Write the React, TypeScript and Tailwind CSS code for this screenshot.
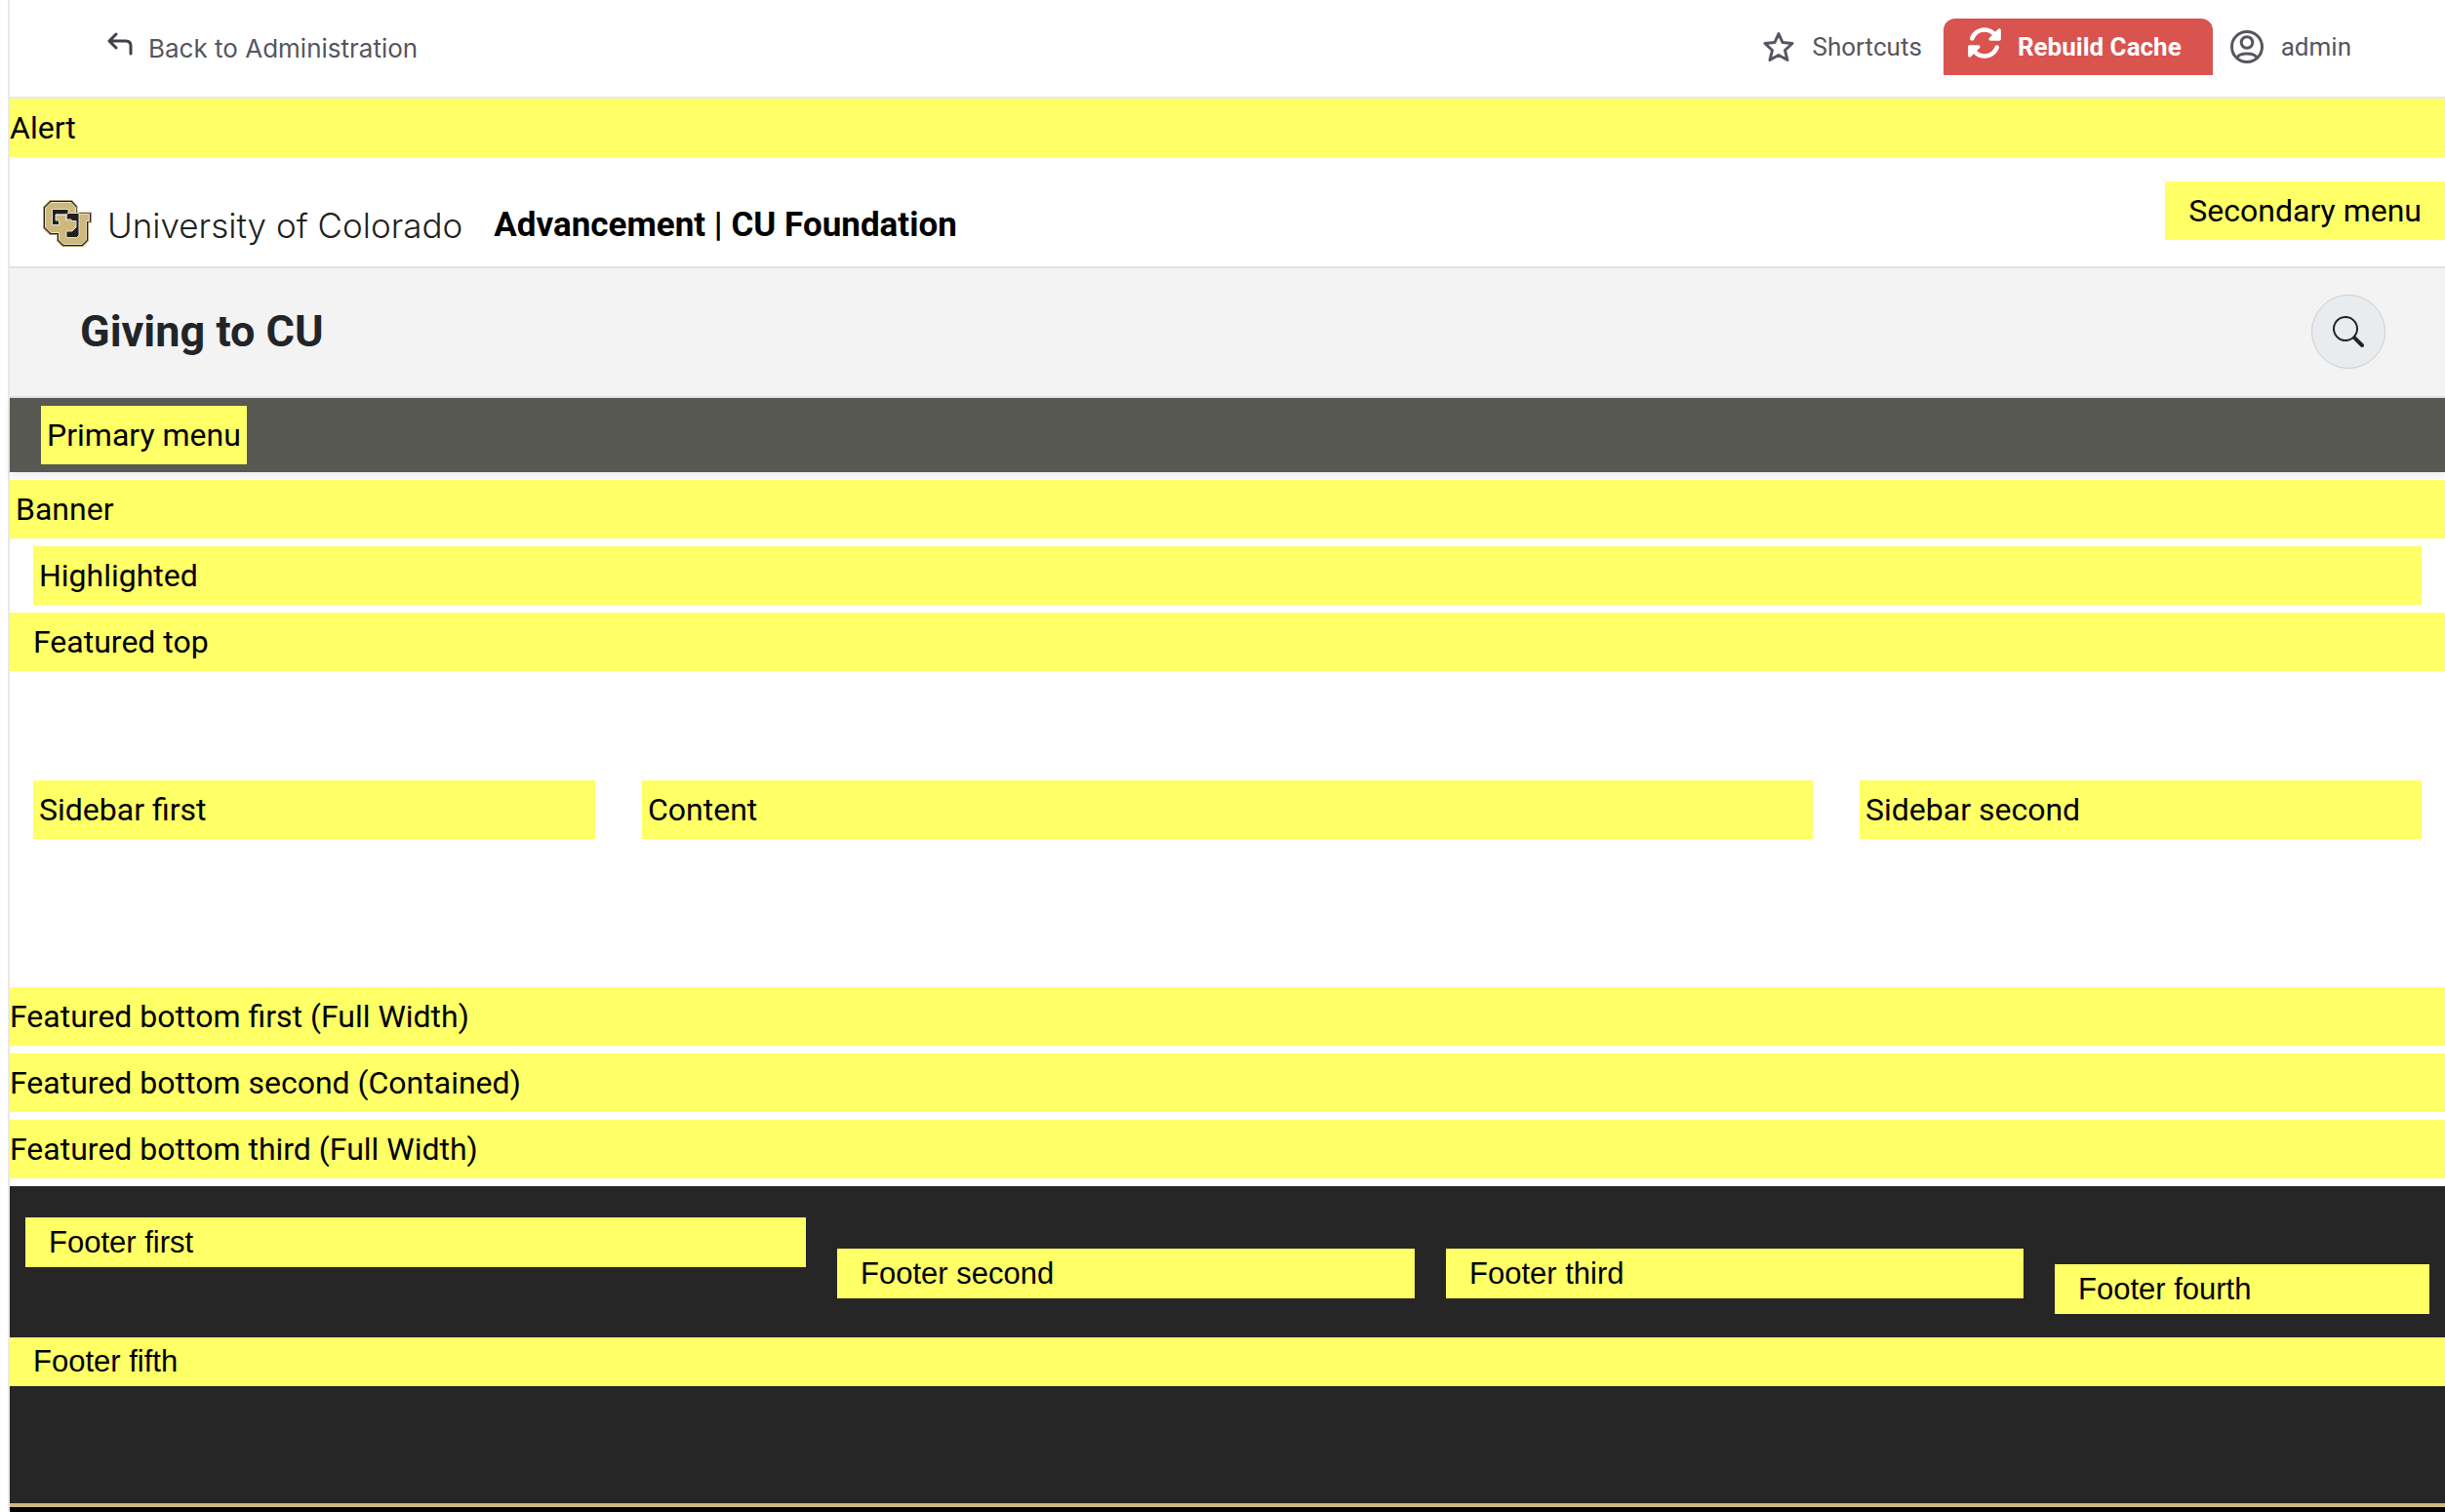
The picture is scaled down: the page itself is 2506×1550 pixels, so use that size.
import React from 'react';
import { BsSearch } from 'react-icons/bs';
import { FaRotate } from 'react-icons/fa6';

interface RegionProps {
    label: string;
    className?: string;
}

const Region: React.FC<RegionProps> = ({ label, className = '' }) => {
    return (
        <div className={`bg-[#ffff66] py-[6px] text-[32px] leading-[48px] text-black ${className}`}>
            {label}
        </div>
    );
};

const FooterRegion: React.FC<RegionProps> = ({ label, className = '' }) => {
    return (
        <div className={`bg-[#ffff66] px-6 font-['Liberation_Sans',sans-serif] text-[31px] text-black ${className}`}>
            {label}
        </div>
    );
};

const CuLogo: React.FC = () => {
    return (
        <svg viewBox="0 0 50 48" className="h-12 w-[50px] shrink-0" aria-hidden="true">
            <path d="M7 0H30L35.500 6V12.500H50V23.500H47V42L41 48H20L14 42V36H7L0 29V7Z" fill="#b5a06a" />
            <path d="M7.500 1H29.500L34.500 6.500V13.500H49V22.500H46V41.500L40.500 47H20.500L15 41.500V35H7.500L1 28.500V7.500Z" fill="#231f20" />
            <path d="M8 2.500H29L33.500 7.500V14.500H47.500V21.500H44.500V41L40 45.500H21L16.500 41V33.500H8L2.500 28V8Z" fill="#cfb87c" stroke="#f1ece0" strokeWidth="0.900" />
            {/* Counters of the interlocked letters */}
            <path d="M9.500 9.500H26V15H13V21H16.500V25.500H9.500Z" fill="#231f20" stroke="#f1ece0" strokeWidth="0.900" />
            <path d="M26 13.500H37V36L34.500 38.500H24V32H30L34 28V21.500H29V20H24V15Z" fill="#231f20" stroke="#f1ece0" strokeWidth="0.900" />
            <path d="M13 15H24V21.500" fill="none" stroke="#f1ece0" strokeWidth="0.900" />
        </svg>
    );
};

const BackIcon: React.FC = () => {
    return (
        <svg viewBox="0 0 26 24" className="mb-[10px] h-6 w-[26px]" fill="none" stroke="#414247" strokeWidth="3" strokeLinecap="round" strokeLinejoin="round" aria-hidden="true">
            <path d="M9 2L2 9L9 16M2 9H19Q24 9 24 14V22" />
        </svg>
    );
};

const StarIcon: React.FC = () => {
    return (
        <svg viewBox="0 0 32 32" className="size-8" fill="none" stroke="currentColor" strokeWidth="3" strokeLinejoin="round" aria-hidden="true">
            <path d="M16 2.500L20 11.500L30 12.500L22.500 19.500L25 29.500L16 24.500L7 29.500L9.500 19.500L2 12.500L12 11.500Z" />
        </svg>
    );
};

const UserIcon: React.FC = () => {
    return (
        <svg viewBox="0 0 34 34" className="size-[34px]" fill="none" stroke="currentColor" strokeWidth="3" aria-hidden="true">
            <circle cx="17" cy="17" r="15.500" />
            <circle cx="17" cy="12.500" r="5.800" />
            <path d="M7 28Q9 24 17 24Q25 24 27 28" />
        </svg>
    );
};

const Toolbar: React.FC = () => {
    return (
        <nav className="flex h-[101px] items-center justify-between border-b-2 border-[#e9e9eb] pr-24 pl-[100px] text-[26px] text-[#55565f]">
            <a href="#" className="flex items-center gap-4 font-['Inter',sans-serif]">
                <BackIcon />
                Back to Administration
            </a>
            <div className="flex items-center pb-[3px]">
                <a href="#" className="flex items-center gap-[18px]">
                    <StarIcon />
                    Shortcuts
                </a>
                <button type="button" className="ml-[22px] flex h-[58px] items-center gap-4 rounded-t-xl bg-[#d9534f] pr-8 pl-6 font-bold text-white">
                    <FaRotate className="mb-2 size-9" aria-hidden="true" />
                    Rebuild Cache
                </button>
                <a href="#" className="ml-[18px] flex items-center gap-[18px]">
                    <UserIcon />
                    admin
                </a>
            </div>
        </nav>
    );
};

export default function App() {
    return (
        <div className="min-h-screen bg-white pl-2 font-['Roboto',sans-serif]">
            <div className="flex min-h-screen flex-col border-l-2 border-[#e9e9eb]">
                <Toolbar />
                <Region label="Alert" />

                <header>
                    <div className="flex h-28 items-start justify-between">
                        <a href="#" className="flex items-end pt-11 pl-[34px] text-[35px] leading-[44px]">
                            <CuLogo />
                            <span className="ml-4 font-['Inter',sans-serif] font-light text-[#231f20]">University of Colorado</span>
                            <span className="ml-8 font-bold text-black">Advancement | CU Foundation</span>
                        </a>
                        <Region label="Secondary menu" className="mt-[25px] px-6" />
                    </div>
                    <div className="flex h-[135px] items-center justify-between border-y-2 border-[#dee2e6] bg-[#f3f3f3] pr-[61px] pb-[2px] pl-[72px]">
                        <h1 className="text-[45px] font-bold text-[#212529]">Giving to CU</h1>
                        <button type="button" aria-label="Search" className="flex size-[76px] items-center justify-center rounded-full border border-[#cccccc] bg-[#e9ecef] text-[#212529]">
                            <BsSearch className="size-8" />
                        </button>
                    </div>
                    <div className="flex h-[76px] items-center bg-[#585953] px-8 shadow-[0_4px_8px_rgba(0,0,0,0.08)]">
                        <Region label="Primary menu" className="px-[6px]" />
                    </div>
                </header>

                <main className="flex flex-col gap-2 pt-2">
                    <Region label="Banner" className="px-[6px]" />
                    <Region label="Highlighted" className="mx-6 px-[6px]" />
                    <Region label="Featured top" className="px-6" />
                    <div className="grid grid-cols-12 pt-[104px] pb-36">
                        <Region label="Sidebar first" className="col-span-3 mx-6 px-[6px]" />
                        <Region label="Content" className="col-span-6 mx-6 px-[6px]" />
                        <Region label="Sidebar second" className="col-span-3 mx-6 px-[6px]" />
                    </div>
                    <Region label="Featured bottom first (Full Width)" />
                    <Region label="Featured bottom second (Contained)" />
                    <Region label="Featured bottom third (Full Width)" />
                </main>

                <footer className="mt-2 flex grow flex-col bg-[#262626]">
                    <div className="grid grid-cols-12 items-start pt-8 pb-6 leading-[51px]">
                        <FooterRegion label="Footer first" className="col-span-4 mx-4" />
                        <FooterRegion label="Footer second" className="col-span-3 mx-4 mt-8" />
                        <FooterRegion label="Footer third" className="col-span-3 mx-4 mt-8" />
                        <FooterRegion label="Footer fourth" className="col-span-2 mx-4 mt-12" />
                    </div>
                    <FooterRegion label="Footer fifth" className="leading-[50px]" />
                    <div className="mt-[120px] grow border-t-4 border-[#cfb87c] bg-black" />
                </footer>
            </div>
        </div>
    );
}
